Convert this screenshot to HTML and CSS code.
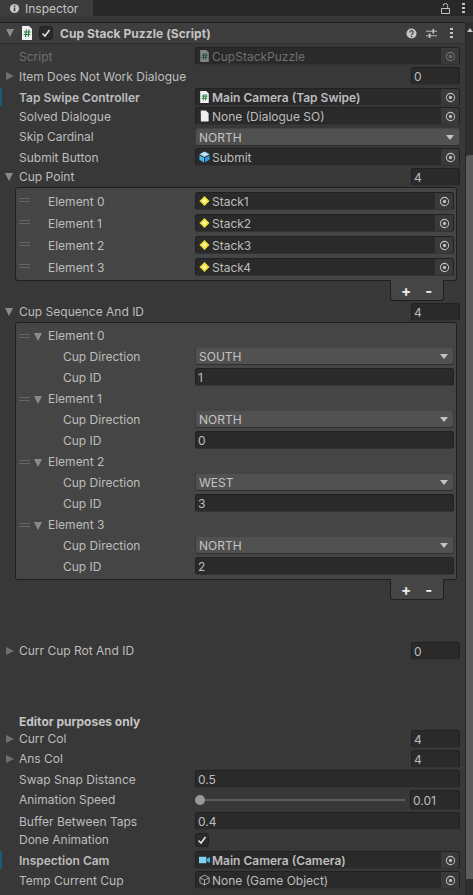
FILE: index.html
```html
<!doctype html>
<html>

<head>
    <meta charset="utf-8">
    <title>Inspector</title>
    <link rel="stylesheet" href="styles.css">
</head>

<body>
    <svg class="defs">
        <symbol id="pick" viewBox="0 0 12 12">
            <circle cx="6" cy="6" r="4.5" fill="none" stroke="currentColor" stroke-width="1.1" />
            <circle cx="6" cy="6" r="1.8" fill="currentColor" />
        </symbol>
        <symbol id="script" viewBox="0 0 12 14">
            <path d="M1 0h7l3 3v11H1z" fill="#f2f2f2" />
            <path d="M5.300 3.500 4.500 11M8 3.500 7.200 11M3 6h6.500M2.700 8.500h6.500" stroke="#1f7a3d" stroke-width="1.100" fill="none" />
        </symbol>
        <symbol id="doc" viewBox="0 0 12 12">
            <path d="M2 0h5.500L10.500 3v9H2z" fill="#eeeeee" />
        </symbol>
        <symbol id="gem" viewBox="0 0 12 12">
            <path d="M6 .500l5.500 5.500L6 11.500.5 6z" fill="#f2dc30" />
            <path d="M6 3l3 3-3 3-3-3z" fill="#fff7a0" />
        </symbol>
        <symbol id="cube" viewBox="0 0 12 12">
            <path d="M6 0l5.500 3L6 6 .5 3z" fill="#b5e3fb" />
            <path d="M.5 4 5.500 6.800V12L.5 9z" fill="#4db5ee" />
            <path d="M11.500 4 6.500 6.800V12l5-3z" fill="#2b9be0" />
        </symbol>
        <symbol id="wire" viewBox="0 0 12 12">
            <path d="M6 .8 11 3.500v5.300L6 11.400 1 8.800V3.500zM1 3.500 6 6.200 11 3.500M6 6.200v5.200" fill="none" stroke="#b9b9b9" stroke-width="1" />
        </symbol>
        <symbol id="cam" viewBox="0 0 12 12">
            <rect x="0" y="2.500" width="8" height="7" fill="#7fd0f5" />
            <path d="M8.500 5 12 2.800v6.400L8.500 7z" fill="#4fb4e6" />
        </symbol>
    </svg>

    <div class="tabbar">
        <div class="tab">
            <svg class="info" viewBox="0 0 12 12">
                <circle cx="6" cy="6" r="5" fill="#c8c8c8" />
                <rect x="5.200" y="5" width="1.700" height="4" fill="#3c3c3c" />
                <rect x="5.200" y="2.600" width="1.700" height="1.600" fill="#3c3c3c" />
            </svg>
            Inspector
        </div>
        <svg class="lock" viewBox="0 0 9 11">
            <path d="M.5 5.500h8v5h-8zM2.300 3.200V2.500a2.200 2 0 0 1 4.400 0V5.500" fill="none" stroke="#c4c4c4" stroke-width="1" />
        </svg>
        <div class="dots"><i></i><i></i><i></i></div>
    </div>

    <div class="panel">
        <main class="inspector">
            <header class="comp-head">
                <span class="arrow down head-arrow"></span>
                <svg class="comp-icon"><use href="#script" /></svg>
                <span class="check"><svg viewBox="0 0 12 12"><path d="M2.500 6.500 5 9l4.500-6" fill="none" stroke="#e6e6e6" stroke-width="1.500" /></svg></span>
                <strong class="comp-title">Cup Stack Puzzle (Script)</strong>
                <svg class="head-btn" viewBox="0 0 12 12">
                    <circle cx="6" cy="6" r="5.500" fill="#c4c4c4" />
                    <path d="M4.200 4.800a1.800 1.800 0 1 1 2.700 1.500C6.200 6.700 6 7 6 7.800" fill="none" stroke="#3e3e3e" stroke-width="1.300" />
                    <rect x="5.300" y="8.500" width="1.400" height="1.400" fill="#3e3e3e" />
                </svg>
                <svg class="head-btn" viewBox="0 0 12 12">
                    <path d="M0 3.500h12M0 8.500h12" stroke="#c4c4c4" stroke-width="1" />
                    <path d="M8 1v5M4 6v5" stroke="#c4c4c4" stroke-width="1.800" />
                </svg>
                <div class="dots head-dots"><i></i><i></i><i></i></div>
            </header>

            <div class="row dim">
                <label>Script</label>
                <div class="field obj"><svg class="ico faded"><use href="#script" /></svg><span>CupStackPuzzle</span><b class="picker"><svg><use href="#pick" /></svg></b></div>
            </div>
            <div class="row">
                <label><span class="arrow right"></span>Item Does Not Work Dialogue</label>
                <div class="field num">0</div>
            </div>
            <div class="row changed gap3">
                <label>Tap Swipe Controller</label>
                <div class="field obj"><svg class="ico"><use href="#script" /></svg><span>Main Camera (Tap Swipe)</span><b class="picker"><svg><use href="#pick" /></svg></b></div>
            </div>
            <div class="row gap1">
                <label>Solved Dialogue</label>
                <div class="field obj"><svg class="ico"><use href="#doc" /></svg><span>None (Dialogue SO)</span><b class="picker"><svg><use href="#pick" /></svg></b></div>
            </div>
            <div class="row gap3 lift">
                <label>Skip Cardinal</label>
                <div class="field select">NORTH<i class="caret"></i></div>
            </div>
            <div class="row">
                <label>Submit Button</label>
                <div class="field obj"><svg class="ico"><use href="#cube" /></svg><span>Submit</span><b class="picker"><svg><use href="#pick" /></svg></b></div>
            </div>
            <div class="row lift">
                <label><span class="arrow down"></span>Cup Point</label>
                <div class="field num">4</div>
            </div>

            <section class="list list-points">
                <div class="item-row">
                    <span class="grip"></span><label>Element 0</label>
                    <div class="field obj"><svg class="ico"><use href="#gem" /></svg><span>Stack1</span><b class="picker"><svg><use href="#pick" /></svg></b></div>
                </div>
                <div class="item-row">
                    <span class="grip"></span><label>Element 1</label>
                    <div class="field obj"><svg class="ico"><use href="#gem" /></svg><span>Stack2</span><b class="picker"><svg><use href="#pick" /></svg></b></div>
                </div>
                <div class="item-row">
                    <span class="grip"></span><label>Element 2</label>
                    <div class="field obj"><svg class="ico"><use href="#gem" /></svg><span>Stack3</span><b class="picker"><svg><use href="#pick" /></svg></b></div>
                </div>
                <div class="item-row">
                    <span class="grip"></span><label>Element 3</label>
                    <div class="field obj"><svg class="ico"><use href="#gem" /></svg><span>Stack4</span><b class="picker"><svg><use href="#pick" /></svg></b></div>
                </div>
            </section>
            <div class="list-foot"><span class="plus">+</span><span class="minus">-</span></div>

            <div class="row seq-row lift">
                <label><span class="arrow down"></span>Cup Sequence And ID</label>
                <div class="field num">4</div>
            </div>

            <section class="list list-seq">
                <div class="group">
                    <div class="group-head"><span class="grip"></span><span class="arrow down"></span>Element 0</div>
                    <div class="sub-row"><label>Cup Direction</label><div class="field select">SOUTH<i class="caret"></i></div></div>
                    <div class="sub-row"><label>Cup ID</label><div class="field text">1</div></div>
                </div>
                <div class="group">
                    <div class="group-head"><span class="grip"></span><span class="arrow down"></span>Element 1</div>
                    <div class="sub-row"><label>Cup Direction</label><div class="field select">NORTH<i class="caret"></i></div></div>
                    <div class="sub-row"><label>Cup ID</label><div class="field text">0</div></div>
                </div>
                <div class="group">
                    <div class="group-head"><span class="grip"></span><span class="arrow down"></span>Element 2</div>
                    <div class="sub-row"><label>Cup Direction</label><div class="field select">WEST<i class="caret"></i></div></div>
                    <div class="sub-row"><label>Cup ID</label><div class="field text">3</div></div>
                </div>
                <div class="group">
                    <div class="group-head"><span class="grip"></span><span class="arrow down"></span>Element 3</div>
                    <div class="sub-row"><label>Cup Direction</label><div class="field select">NORTH<i class="caret"></i></div></div>
                    <div class="sub-row"><label>Cup ID</label><div class="field text">2</div></div>
                </div>
            </section>
            <div class="list-foot"><span class="plus">+</span><span class="minus">-</span></div>

            <div class="row rot-row lift">
                <label><span class="arrow right"></span>Curr Cup Rot And ID</label>
                <div class="field num">0</div>
            </div>

            <h4 class="section-title">Editor purposes only</h4>

            <div class="row col-row lift">
                <label><span class="arrow right"></span>Curr Col</label>
                <div class="field num">4</div>
            </div>
            <div class="row lift">
                <label><span class="arrow right"></span>Ans Col</label>
                <div class="field num">4</div>
            </div>
            <div class="row">
                <label>Swap Snap Distance</label>
                <div class="field text">0.5</div>
            </div>
            <div class="row slider-row lift">
                <label>Animation Speed</label>
                <div class="slider"><i class="thumb"></i></div>
                <div class="field num">0.01</div>
            </div>
            <div class="row">
                <label>Buffer Between Taps</label>
                <div class="field text">0.4</div>
            </div>
            <div class="row done-row lift">
                <label>Done Animation</label>
                <span class="check"><svg viewBox="0 0 12 12"><path d="M2.500 6.500 5 9l4.500-6" fill="none" stroke="#e6e6e6" stroke-width="1.500" /></svg></span>
            </div>
            <div class="row changed insp-row">
                <label>Inspection Cam</label>
                <div class="field obj"><svg class="ico"><use href="#cam" /></svg><span>Main Camera (Camera)</span><b class="picker"><svg><use href="#pick" /></svg></b></div>
            </div>
            <div class="row">
                <label>Temp Current Cup</label>
                <div class="field obj"><svg class="ico"><use href="#wire" /></svg><span>None (Game Object)</span><b class="picker"><svg><use href="#pick" /></svg></b></div>
            </div>
        </main>

        <aside class="scrollbar">
            <i class="scroll-up"></i>
            <div class="scroll-thumb"></div>
        </aside>
    </div>
</body>

</html>
```

FILE: styles.css
```css
* {
    box-sizing: border-box;
}

html,
body {
    margin: 0;
    height: 895px;
    overflow: hidden;
}

body {
    background: #383838;
    color: #bdbdbd;
    font-family: Inter, "Noto Sans", sans-serif;
    font-size: 12px;
}

.defs {
    display: none;
}

/* tab bar */
.tabbar {
    display: flex;
    align-items: center;
    height: 16px;
    background: #282828;
    padding-right: 8px;
}

.tab {
    display: flex;
    align-items: center;
    gap: 5px;
    width: 93px;
    height: 16px;
    padding-left: 9px;
    background: #3c3c3c;
    color: #c4c4c4;
}

.info {
    width: 11px;
    height: 11px;
}

.lock {
    width: 9px;
    height: 11px;
    margin-left: auto;
    margin-right: 12px;
}

.dots {
    display: flex;
    flex-direction: column;
    gap: 2px;
    width: 3px;
}

.dots i {
    width: 3px;
    height: 2px;
    background: #c4c4c4;
}

.panel {
    display: flex;
    height: 879px;
    padding-top: 6px;
}

.inspector {
    flex: 1;
    min-width: 0;
}

/* component header */
.comp-head {
    display: flex;
    align-items: center;
    height: 22px;
    background: #3e3e3e;
    border-top: 1px solid #1f1f1f;
    border-bottom: 1px solid #2e2e2e;
    padding-right: 12px;
}

.head-arrow {
    margin-left: 6px;
}

.comp-icon {
    width: 12px;
    height: 14px;
    margin-left: 7px;
}

.comp-head .check {
    margin-left: 6px;
}

.comp-title {
    margin-left: 7px;
    font-size: 12px;
    font-weight: 700;
    letter-spacing: 0.06px;
    color: #c4c4c4;
    flex: 1;
}

.head-btn {
    width: 11px;
    height: 11px;
    margin-right: 9px;
}

.head-btn + .head-btn {
    margin-right: 13px;
}

.head-dots {
    margin-right: 0;
}

/* arrows */
.arrow {
    display: inline-block;
    width: 0;
    height: 0;
    flex: none;
}

.arrow.right {
    border-left: 8px solid #6f6f6f;
    border-top: 4px solid transparent;
    border-bottom: 4px solid transparent;
    position: absolute;
    left: 6px;
    top: 5px;
}

.arrow.down {
    border-top: 8px solid #8a8a8a;
    border-left: 4.500px solid transparent;
    border-right: 4.500px solid transparent;
}

.row label .arrow.down {
    position: absolute;
    left: 5px;
    top: 5px;
}

/* rows */
.row {
    position: relative;
    display: flex;
    align-items: center;
    height: 18px;
    margin-top: 2px;
    padding-right: 5px;
}

.comp-head + .row {
    margin-top: 3px;
}

.row > label {
    width: 195px;
    padding-left: 19px;
    flex: none;
    white-space: nowrap;
}

.row.lift > label {
    padding-bottom: 2px;
}

.row.dim,
.row.dim .field {
    color: #707070;
}

.row.changed {
    box-shadow: inset 2px 0 #1d5a7a;
    font-weight: 600;
}

.gap3 {
    margin-top: 3px;
}

.gap1 {
    margin-top: 1px;
}

/* fields */
.field {
    display: flex;
    align-items: center;
    flex: 1;
    min-width: 0;
    height: 18px;
    background: #2a2a2a;
    border: 1px solid #212121;
    border-bottom-color: #333333;
    border-radius: 3px;
    padding-left: 2px;
    color: #bdbdbd;
    white-space: nowrap;
}

.field.num {
    flex: none;
    width: 49px;
    margin-left: auto;
}

.field.select {
    background: #515151;
    border-color: #3c3c3c;
    border-top-color: #454545;
    border-bottom-color: #2f2f2f;
    padding-left: 3px;
    position: relative;
    color: #c4c4c4;
}

.caret {
    position: absolute;
    right: 5px;
    top: 6px;
    border-top: 5px solid #c4c4c4;
    border-left: 4px solid transparent;
    border-right: 4px solid transparent;
}

.field.obj {
    padding: 0;
    padding-left: 3px;
}

.field.obj span {
    flex: 1;
    margin-left: 2px;
}

.ico {
    width: 11px;
    height: 12px;
    flex: none;
}

.faded {
    opacity: 0.45;
}

.picker {
    display: flex;
    align-items: center;
    justify-content: center;
    width: 18px;
    height: 16px;
    background: #3a3a3a;
    color: #bdbdbd;
    border-radius: 0 2px 2px 0;
}

.dim .picker {
    color: #707070;
}

.picker svg {
    width: 11px;
    height: 11px;
}

/* lists */
.list {
    margin: 0 8px 0 15px;
    background: #454545;
    border: 1px solid #1f1f1f;
    border-radius: 3px;
}

.list-points {
    height: 94px;
    margin-top: 1px;
    padding: 4px 2px 0 0;
    border-bottom-right-radius: 3px;
}

.item-row {
    display: flex;
    align-items: center;
    height: 18px;
    margin-bottom: 4px;
}

.item-row label {
    width: 165px;
    padding-left: 18px;
}

.grip {
    width: 11px;
    height: 4px;
    margin-left: 3px;
    border-top: 1px solid #666666;
    border-bottom: 1px solid #666666;
    flex: none;
    align-self: flex-start;
    margin-top: 6px;
}

.list-foot {
    display: flex;
    align-items: center;
    width: 54px;
    height: 21px;
    margin: -1px 21px 0 auto;
    background: #454545;
    border: 1px solid #1f1f1f;
    border-top: none;
    border-radius: 0 0 3px 3px;
    color: #eeeeee;
    font-weight: 700;
    font-size: 15px;
}

.plus {
    margin-left: 10px;
}

.minus {
    margin-left: 14px;
}

.seq-row {
    margin-top: 2px;
}

.list-seq {
    height: 258px;
    margin-top: 1px;
    padding: 4px 2px 0 0;
}

.group {
    height: 63px;
}

.group-head {
    display: flex;
    align-items: flex-start;
    height: 20px;
    line-height: 18px;
}

.group-head .grip {
    margin-top: 7px;
}

.group-head .arrow {
    margin: 6px 6px 0 4px;
}

.sub-row {
    display: flex;
    align-items: center;
    height: 18px;
    margin-bottom: 3px;
}

.sub-row label {
    width: 179px;
    padding-left: 47px;
    flex: none;
}

.rot-row {
    margin-top: 42px;
}

.section-title {
    margin: 53px 0 0;
    padding-left: 19px;
    font-size: 12px;
    font-weight: 700;
    line-height: 17px;
    color: #c4c4c4;
}

.col-row {
    margin-top: 0;
}

/* slider */
.slider-row {
    height: 20px;
}

.slider {
    position: relative;
    flex: 1;
    height: 2px;
    margin-right: 5px;
    background: #5c5c5c;
}

.thumb {
    position: absolute;
    left: 0;
    top: -4px;
    width: 10px;
    height: 10px;
    border-radius: 50%;
    background: #999999;
}

.slider-row .field.num {
    width: 50px;
    height: 20px;
}

.done-row {
    height: 14px;
    margin-top: 3px;
}

.check {
    display: flex;
    width: 14px;
    height: 14px;
    background: #2a2a2a;
    border: 1px solid #212121;
    border-radius: 3px;
    flex: none;
}

.check svg {
    width: 12px;
    height: 12px;
}

.insp-row {
    margin-top: 4px;
}

/* scrollbar */
.scrollbar {
    position: relative;
    width: 8px;
    flex: none;
    background: #2e2e2e;
    border-left: 1px solid #282828;
}

.scroll-up {
    position: absolute;
    top: 6px;
    left: 1px;
    border-bottom: 4px solid #c4c4c4;
    border-left: 3px solid transparent;
    border-right: 3px solid transparent;
}

.scroll-thumb {
    height: 724px;
    margin-top: 133px;
    background: #5c5c5c;
    border-radius: 3px 0 0 0;
}
```
